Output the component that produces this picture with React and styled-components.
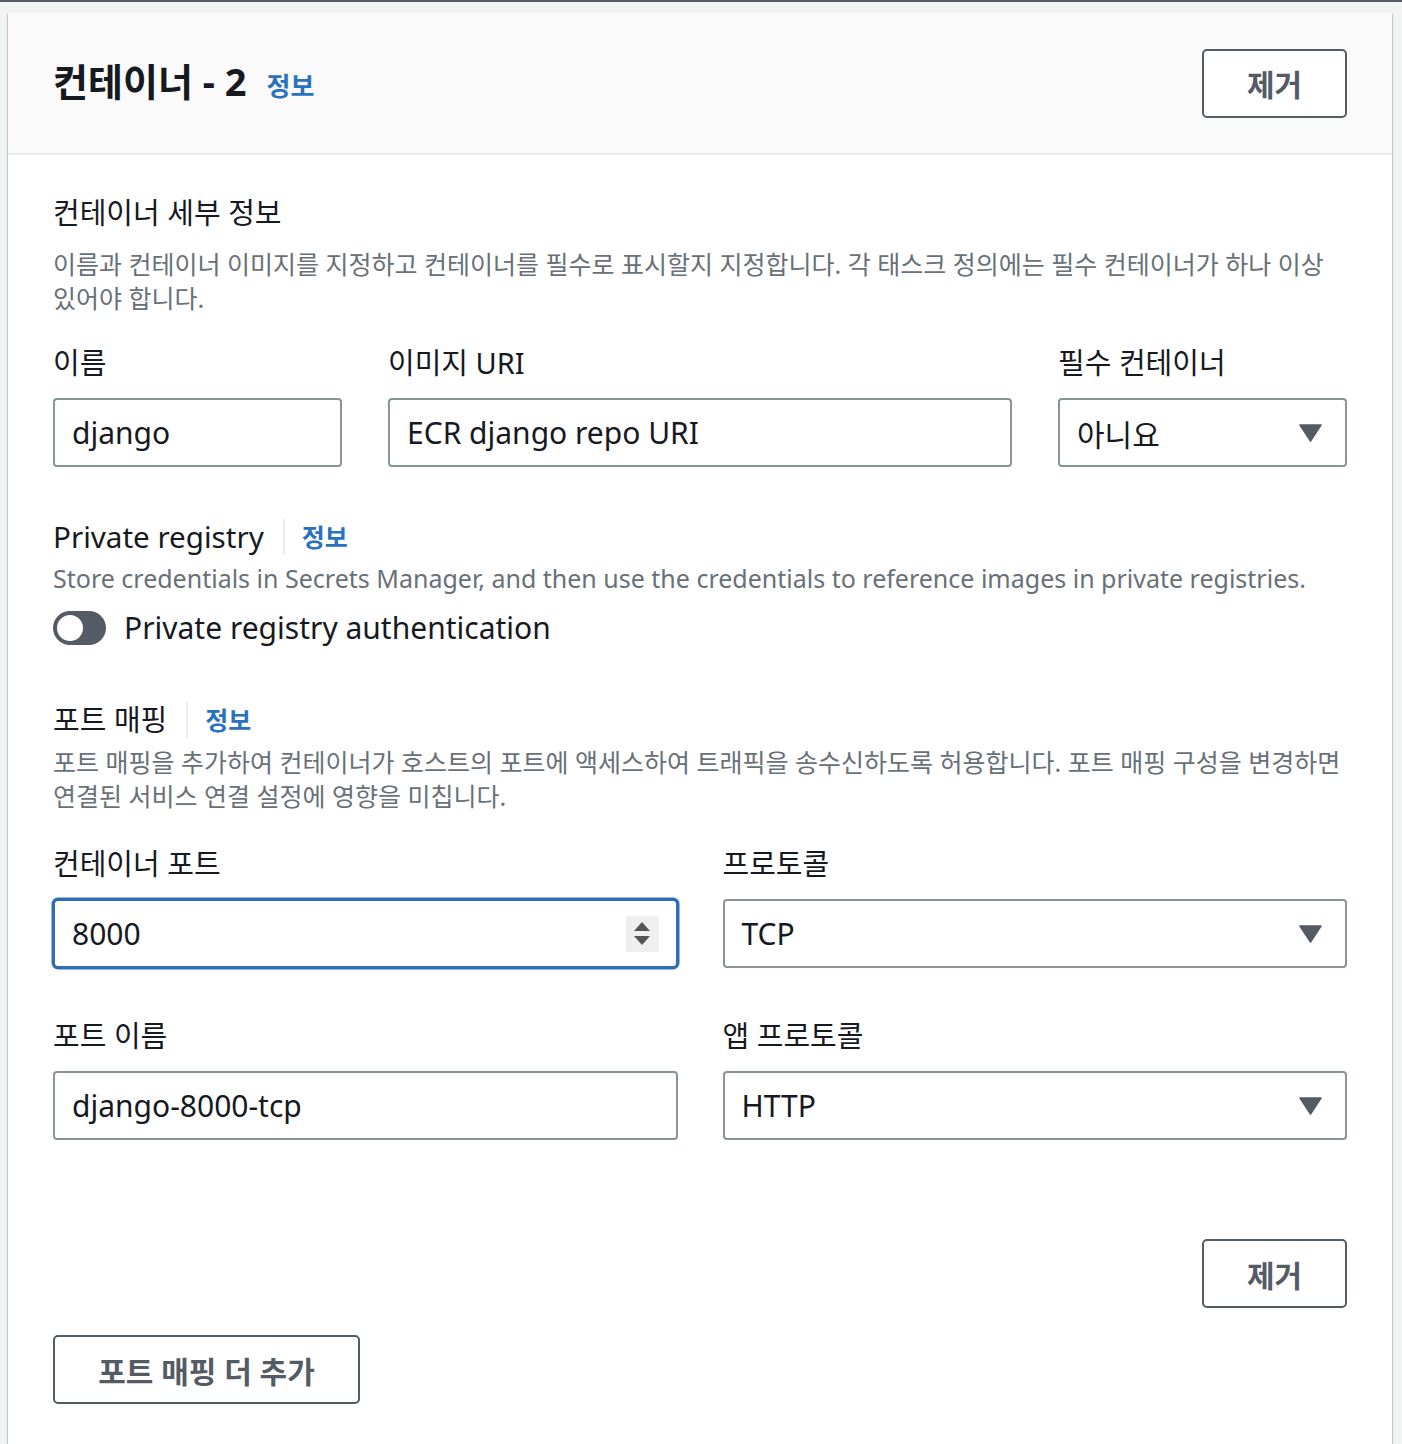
import React from "react";
import styled, { createGlobalStyle } from "styled-components";

const Global = createGlobalStyle`
  html, body { margin: 0; padding: 0; background: #f2f3f3; }
  body { font-family: "Noto Sans", "Noto Sans CJK KR", sans-serif; color: #16191f; }
  * { box-sizing: border-box; }
`;

const TopStripe = styled.div`
  height: 2px;
  background: #545b64;
`;

const Page = styled.div`
  padding: 11px 10px 0 8px;
`;

const Panel = styled.section`
  background: #fff;
  width: 1384px;
  min-height: 1431px;
  box-shadow: 0 1px 1px 0 rgba(0, 28, 36, 0.3), 1px 1px 1px 0 rgba(0, 28, 36, 0.15),
    -1px 1px 1px 0 rgba(0, 28, 36, 0.15);
`;

const Header = styled.header`
  height: 142px;
  background: #fafafa;
  border-bottom: 2px solid #eaeded;
  display: flex;
  align-items: center;
  justify-content: space-between;
  padding: 0 45px;
`;

const TitleRow = styled.div`
  display: flex;
  align-items: baseline;
  gap: 20px;
  margin-bottom: 8px;
`;

const Title = styled.h2`
  margin: 0;
  font-size: 38px;
  font-weight: 700;
  color: #16191f;
`;

const InfoLink = styled.a`
  font-size: ${(p) => p.$size || 25}px;
  font-weight: 700;
  color: #2a72bd;
  text-decoration: none;
`;

const Button = styled.button`
  font-family: inherit;
  width: ${(p) => p.$w || 145}px;
  height: 69px;
  background: #fff;
  border: 2px solid #545b64;
  border-radius: 5px;
  color: #545b64;
  font-size: 30px;
  font-weight: 700;
  cursor: pointer;
`;

const Body = styled.div`
  padding: 40px 45px 40px 45px;
  display: flex;
  flex-direction: column;
`;

const SectionTitle = styled.div`
  display: flex;
  align-items: center;
  height: 36px;
  font-size: ${(p) => (p.$latin ? 29.6 : 29)}px;
  line-height: 36px;
  margin-top: ${(p) => p.$mt || 0}px;
`;

const Divider = styled.span`
  width: 2px;
  height: 36px;
  background: #eaeded;
  margin: 0 17px 0 19px;
`;

const Desc = styled.p`
  margin: ${(p) => p.$mt || 0}px 0 0;
  font-size: 25px;
  line-height: 34px;
  color: #687078;
`;

const Grid = styled.div`
  display: grid;
  grid-template-columns: ${(p) => p.$cols};
  column-gap: ${(p) => p.$gap || 46}px;
  margin-top: ${(p) => p.$mt || 0}px;
`;

const Field = styled.div`
  display: flex;
  flex-direction: column;
`;

const Label = styled.label`
  font-size: 29px;
  line-height: 36px;
  margin-bottom: 17px;
`;

const InputBox = styled.div`
  position: relative;
  height: 69px;
  border: 2px solid ${(p) => (p.$focus ? "#2f6eb5" : "#879596")};
  box-shadow: ${(p) => (p.$focus ? "0 0 0 1.5px #2f6eb5" : "none")};
  border-radius: ${(p) => (p.$focus ? 5 : 4)}px;
  display: flex;
  align-items: center;
  padding: 0 17px;
  font-size: 30px;
  color: #16191f;
  background: #fff;
`;

const Value = styled.span`
  flex: 1;
`;

const Caret = styled.svg`
  width: 23px;
  height: 18px;
  margin-right: 6px;
`;

const Spinner = styled.div`
  width: 33px;
  height: 36px;
  background: #efefef;
  display: flex;
  flex-direction: column;
  align-items: center;
  justify-content: center;
  gap: 5px;
`;

const ToggleRow = styled.div`
  display: flex;
  align-items: center;
  gap: 18px;
  margin-top: 13px;
  font-size: 30px;
  line-height: 40px;
`;

const Toggle = styled.span`
  width: 53px;
  height: 34px;
  border-radius: 17px;
  background: #545b64;
  position: relative;
  flex-shrink: 0;
  &::after {
    content: "";
    position: absolute;
    left: 4px;
    top: 4px;
    width: 26px;
    height: 26px;
    border-radius: 50%;
    background: #fff;
  }
`;

const RightAction = styled.div`
  display: flex;
  justify-content: flex-end;
  margin-top: 99px;
`;

const LeftAction = styled.div`
  margin-top: 27px;
`;

function SelectCaret() {
  return (
    <Caret viewBox="0 0 23 18">
      <path d="M1 1 H22 L11.5 17 Z" fill="#545b64" stroke="#545b64" strokeWidth="1.5" strokeLinejoin="round" />
    </Caret>
  );
}

function Select({ value }) {
  return (
    <InputBox>
      <Value>{value}</Value>
      <SelectCaret />
    </InputBox>
  );
}

export default function App() {
  return (
    <>
      <Global />
      <TopStripe />
      <Page>
        <Panel>
          <Header>
            <TitleRow>
              <Title>컨테이너 - 2</Title>
              <InfoLink href="#" $size={26}>정보</InfoLink>
            </TitleRow>
            <Button>제거</Button>
          </Header>
          <Body>
            <SectionTitle>컨테이너 세부 정보</SectionTitle>
            <Desc $mt={16}>
              이름과 컨테이너 이미지를 지정하고 컨테이너를 필수로 표시할지 지정합니다. 각 태스크 정의에는 필수 컨테이너가 하나 이상
              있어야 합니다.
            </Desc>
            <Grid $cols="289px 1fr 289px" $gap={46} $mt={30}>
              <Field>
                <Label>이름</Label>
                <InputBox>
                  <Value>django</Value>
                </InputBox>
              </Field>
              <Field>
                <Label>이미지 URI</Label>
                <InputBox>
                  <Value>ECR django repo URI</Value>
                </InputBox>
              </Field>
              <Field>
                <Label>필수 컨테이너</Label>
                <Select value="아니요" />
              </Field>
            </Grid>

            <SectionTitle $mt={52} $latin>
              Private registry
              <Divider />
              <InfoLink href="#">정보</InfoLink>
            </SectionTitle>
            <Desc $mt={6}>
              Store credentials in Secrets Manager, and then use the credentials to reference images in private registries.
            </Desc>
            <ToggleRow>
              <Toggle />
              Private registry authentication
            </ToggleRow>

            <SectionTitle $mt={54}>
              포트 매핑
              <Divider />
              <InfoLink href="#">정보</InfoLink>
            </SectionTitle>
            <Desc $mt={7}>
              포트 매핑을 추가하여 컨테이너가 호스트의 포트에 액세스하여 트래픽을 송수신하도록 허용합니다. 포트 매핑 구성을 변경하면
              연결된 서비스 연결 설정에 영향을 미칩니다.
            </Desc>
            <Grid $cols="1fr 1fr" $gap={45} $mt={33}>
              <Field>
                <Label>컨테이너 포트</Label>
                <InputBox $focus>
                  <Value>8000</Value>
                  <Spinner>
                    <svg width="16" height="9" viewBox="0 0 16 9">
                      <path d="M8 0 L16 9 H0 Z" fill="#555" />
                    </svg>
                    <svg width="16" height="9" viewBox="0 0 16 9">
                      <path d="M0 0 H16 L8 9 Z" fill="#555" />
                    </svg>
                  </Spinner>
                </InputBox>
              </Field>
              <Field>
                <Label>프로토콜</Label>
                <Select value="TCP" />
              </Field>
            </Grid>
            <Grid $cols="1fr 1fr" $gap={45} $mt={50}>
              <Field>
                <Label>포트 이름</Label>
                <InputBox>
                  <Value>django-8000-tcp</Value>
                </InputBox>
              </Field>
              <Field>
                <Label>앱 프로토콜</Label>
                <Select value="HTTP" />
              </Field>
            </Grid>
            <RightAction>
              <Button>제거</Button>
            </RightAction>
            <LeftAction>
              <Button $w={307}>포트 매핑 더 추가</Button>
            </LeftAction>
          </Body>
        </Panel>
      </Page>
    </>
  );
}
